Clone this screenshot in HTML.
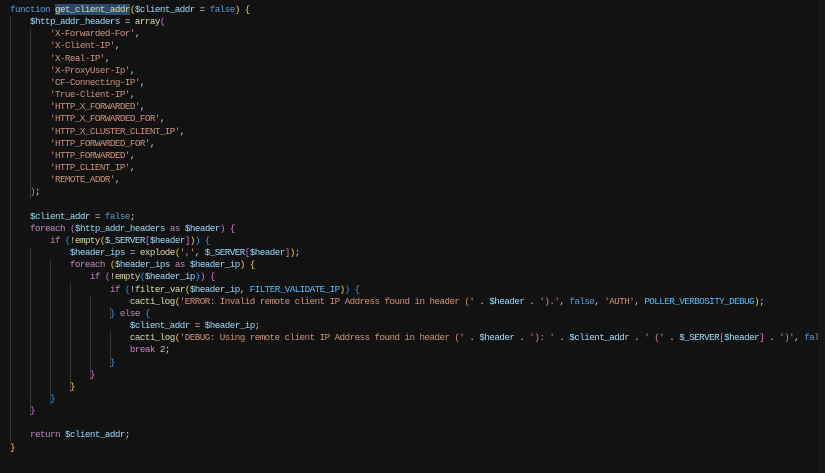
<!DOCTYPE html>
<html><head><meta charset="utf-8"><style>
html,body{margin:0;padding:0;background:#121212;width:825px;height:473px;overflow:hidden}
#ed{position:absolute;left:10px;top:4px;width:808px;overflow:hidden;font-family:"Liberation Mono",monospace;font-size:9.2px;letter-spacing:-0.52px;line-height:12.16px;color:#d4d4d4;white-space:pre}
.k{color:#569cd6}.c{color:#c586c0}.v{color:#9cdcfe}.s{color:#ce9178}.f{color:#dcdcaa}.n{color:#4fc1ff}
.g{color:#ffd700}.p{color:#da70d6}.b{color:#179fff}
.sel{background:#2b4a6a}
.gd{position:absolute;width:1px;background:#333}
#sb{position:absolute;left:818px;top:0;width:7px;height:473px;background:#161616}
</style></head><body>
<div class="gd" style="left:10px;top:16px;height:426px"></div>
<div class="gd" style="left:30px;top:28px;height:171px"></div>
<div class="gd" style="left:30px;top:247px;height:170px"></div>
<div class="gd" style="left:50px;top:259px;height:146px"></div>
<div class="gd" style="left:70px;top:283px;height:110px"></div>
<div class="gd" style="left:90px;top:295px;height:85px"></div>
<div class="gd" style="left:110px;top:307px;height:12px"></div>
<div class="gd" style="left:110px;top:331px;height:37px"></div>
<div id="ed"><span class="k">function</span> <span class="f sel">get_client_addr</span><span class="g">(</span><span class="v">$client_addr</span> = <span class="k">false</span><span class="g">)</span> <span class="g">{</span>
    <span class="v">$http_addr_headers</span> = <span class="f">array</span><span class="p">(</span>
        <span class="s">'X-Forwarded-For'</span>,
        <span class="s">'X-Client-IP'</span>,
        <span class="s">'X-Real-IP'</span>,
        <span class="s">'X-ProxyUser-Ip'</span>,
        <span class="s">'CF-Connecting-IP'</span>,
        <span class="s">'True-Client-IP'</span>,
        <span class="s">'HTTP_X_FORWARDED'</span>,
        <span class="s">'HTTP_X_FORWARDED_FOR'</span>,
        <span class="s">'HTTP_X_CLUSTER_CLIENT_IP'</span>,
        <span class="s">'HTTP_FORWARDED_FOR'</span>,
        <span class="s">'HTTP_FORWARDED'</span>,
        <span class="s">'HTTP_CLIENT_IP'</span>,
        <span class="s">'REMOTE_ADDR'</span>,
    <span class="p">)</span>;

    <span class="v">$client_addr</span> = <span class="k">false</span>;
    <span class="c">foreach</span> <span class="p">(</span><span class="v">$http_addr_headers</span> <span class="c">as</span> <span class="v">$header</span><span class="p">)</span> <span class="p">{</span>
        <span class="c">if</span> <span class="b">(</span>!<span class="f">empty</span><span class="g">(</span><span class="v">$_SERVER</span><span class="p">[</span><span class="v">$header</span><span class="p">]</span><span class="g">)</span><span class="b">)</span> <span class="b">{</span>
            <span class="v">$header_ips</span> = <span class="f">explode</span><span class="g">(</span><span class="s">','</span>, <span class="v">$_SERVER</span><span class="p">[</span><span class="v">$header</span><span class="p">]</span><span class="g">)</span>;
            <span class="c">foreach</span> <span class="g">(</span><span class="v">$header_ips</span> <span class="c">as</span> <span class="v">$header_ip</span><span class="g">)</span> <span class="g">{</span>
                <span class="c">if</span> <span class="p">(</span>!<span class="f">empty</span><span class="b">(</span><span class="v">$header_ip</span><span class="b">)</span><span class="p">)</span> <span class="p">{</span>
                    <span class="c">if</span> <span class="b">(</span>!<span class="f">filter_var</span><span class="g">(</span><span class="v">$header_ip</span>, <span class="n">FILTER_VALIDATE_IP</span><span class="g">)</span><span class="b">)</span> <span class="b">{</span>
                        <span class="f">cacti_log</span><span class="g">(</span><span class="s">'ERROR: Invalid remote client IP Address found in header ('</span> . <span class="v">$header</span> . <span class="s">').'</span>, <span class="k">false</span>, <span class="s">'AUTH'</span>, <span class="n">POLLER_VERBOSITY_DEBUG</span><span class="g">)</span>;
                    <span class="b">}</span> <span class="c">else</span> <span class="b">{</span>
                        <span class="v">$client_addr</span> = <span class="v">$header_ip</span>;
                        <span class="f">cacti_log</span><span class="g">(</span><span class="s">'DEBUG: Using remote client IP Address found in header ('</span> . <span class="v">$header</span> . <span class="s">'): '</span> . <span class="v">$client_addr</span> . <span class="s">' ('</span> . <span class="v">$_SERVER</span><span class="p">[</span><span class="v">$header</span><span class="p">]</span> . <span class="s">')'</span>, <span class="k">false</span>, <span class="s">'AUTH'</span>
                        <span class="c">break</span> <span style="color:#b5cea8">2</span>;
                    <span class="b">}</span>
                <span class="p">}</span>
            <span class="g">}</span>
        <span class="b">}</span>
    <span class="p">}</span>

    <span class="c">return</span> <span class="v">$client_addr</span>;
<span class="g">}</span></div>
<div id="sb"></div>
</body></html>
